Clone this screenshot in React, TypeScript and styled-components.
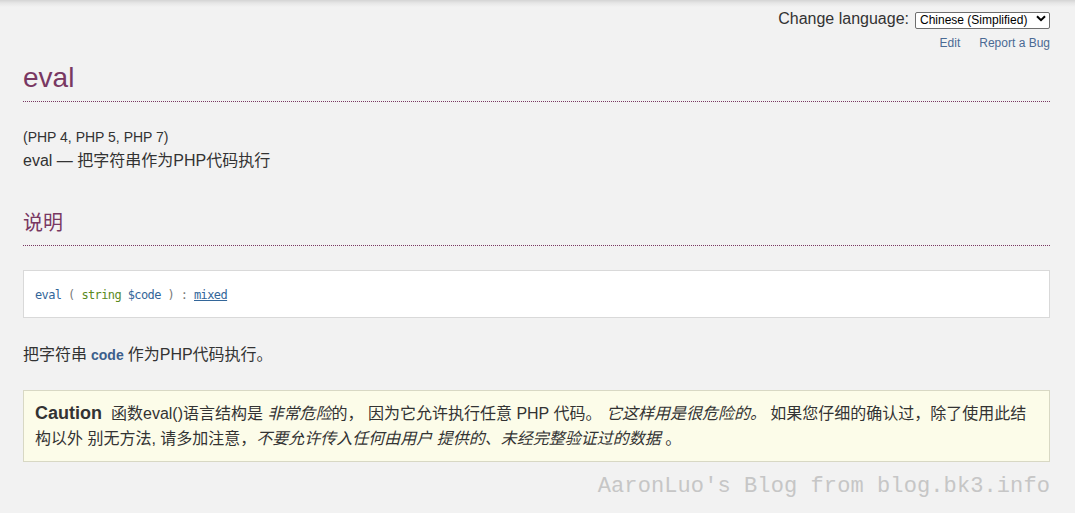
import React from "react";
import styled, { createGlobalStyle } from "styled-components";

const Global = createGlobalStyle`
  html, body { margin: 0; padding: 0; background: #f2f2f2; }
  body {
    font-family: "Liberation Sans", Arial, "Noto Sans CJK SC", sans-serif;
    color: #333;
  }
  * { box-sizing: border-box; }
`;

const Page = styled.div`
  min-height: 513px;
  background: linear-gradient(to bottom, #d4d4d4 0px, #e6e6e6 3px, #f2f2f2 7px, #f2f2f2 100%);
  padding: 0 25px 0 23px;
  font-family: "Liberation Sans", Arial, "Noto Sans CJK SC", sans-serif;
`;

const LangRow = styled.div`
  display: flex;
  justify-content: flex-end;
  align-items: center;
  gap: 6px;
  padding-top: 9px;
  height: 28px;
`;

const LangLabel = styled.label`
  font-size: 16px;
  color: #333;
`;

const SelectWrap = styled.div`
  position: relative;
  width: 135px;
  height: 17px;
`;

const Select = styled.select`
  appearance: none;
  -webkit-appearance: none;
  width: 100%;
  height: 100%;
  border: 1px solid #6e6e6e;
  border-radius: 2px;
  background: #fff;
  font-family: "Liberation Sans", Arial, sans-serif;
  font-size: 12px;
  color: #000;
  padding: 0 0 0 4px;
  line-height: 15px;
`;

const Chevron = styled.svg`
  position: absolute;
  right: 4px;
  top: 5px;
  pointer-events: none;
`;

const EditRow = styled.div`
  display: flex;
  justify-content: flex-end;
  gap: 19px;
  margin-top: 8px;
  height: 16px;
`;

const TopLink = styled.a`
  font-size: 12px;
  color: #4a6a94;
  text-decoration: none;
`;

const Title = styled.h1`
  margin: 9px 0 0;
  font-size: 28px;
  font-weight: normal;
  color: #793862;
  line-height: 34px;
  padding-bottom: 6px;
  border-bottom: 1px dotted #793862;
`;

const Versions = styled.p`
  margin: 27px 0 0;
  font-size: 14px;
  line-height: 17px;
  color: #333;
`;

const Purpose = styled.p`
  margin: 5px 0 0;
  font-size: 16px;
  line-height: 20px;
  color: #333;
  font-family: "Liberation Sans", Arial, "Noto Sans CJK SC", sans-serif;
`;

const SectionTitle = styled.h2`
  margin: 38px 0 0;
  font-size: 20px;
  font-weight: normal;
  color: #793862;
  line-height: 26px;
  padding-bottom: 10px;
  border-bottom: 1px dotted #793862;
  font-family: "Noto Sans CJK SC", sans-serif;
`;

const CodeBox = styled.div`
  margin-top: 24px;
  height: 48px;
  background: #fff;
  border: 1px solid #d9d9d9;
  display: flex;
  align-items: center;
  padding: 2px 11px 0;
  font-family: "DejaVu Sans Mono", "Liberation Mono", monospace;
  font-size: 12px;
  letter-spacing: -0.6px;
  color: #336699;
  white-space: pre;
`;

const Tok = styled.span<{ $kind: "method" | "type" | "param" | "punct" }>`
  color: ${(p) =>
    p.$kind === "type" ? "#5a8a1e" : p.$kind === "punct" ? "#7a7a7a" : "#336699"};
`;

const TypeLink = styled.a`
  color: #336699;
  text-decoration: underline;
`;

const Para = styled.p`
  margin: 27px 0 0;
  font-size: 16px;
  line-height: 20px;
  color: #333;
  font-family: "Liberation Sans", Arial, "Noto Sans CJK SC", sans-serif;
`;

const ParamCode = styled.code`
  font-family: "Liberation Sans", Arial, sans-serif;
  font-weight: bold;
  font-size: 14px;
  color: #3c5f8c;
  margin: 0 4px;
`;

const Caution = styled.div`
  margin-top: 25px;
  background: #fcfce9;
  border: 1px solid #d8d8c4;
  padding: 10px 11px 10px 11px;
  font-size: 16px;
  line-height: 25px;
  color: #333;
  font-family: "Liberation Sans", Arial, "Noto Sans CJK SC", sans-serif;
`;

const CautionLabel = styled.strong`
  font-size: 18px;
  font-weight: bold;
  margin-right: 9px;
`;

const Em = styled.em`
  font-style: italic;
`;

const Watermark = styled.div`
  margin-top: 11px;
  text-align: right;
  font-family: "Liberation Mono", "Courier New", monospace;
  font-size: 22px;
  letter-spacing: 0.1px;
  color: #c6c6c6;
  line-height: 28px;
`;

export default function App() {
  return (
    <>
      <Global />
      <Page>
        <LangRow>
          <LangLabel htmlFor="lang">Change language:</LangLabel>
          <SelectWrap>
            <Select id="lang" defaultValue="zh">
              <option value="zh">Chinese (Simplified)</option>
              <option value="en">English</option>
            </Select>
            <Chevron width="10" height="7" viewBox="0 0 10 7">
              <path d="M1 1.2 L5 5.2 L9 1.2" fill="none" stroke="#000" strokeWidth="2" />
            </Chevron>
          </SelectWrap>
        </LangRow>
        <EditRow>
          <TopLink href="#">Edit</TopLink>
          <TopLink href="#">Report a Bug</TopLink>
        </EditRow>

        <Title>eval</Title>
        <Versions>(PHP 4, PHP 5, PHP 7)</Versions>
        <Purpose>eval — 把字符串作为PHP代码执行</Purpose>

        <SectionTitle>说明</SectionTitle>
        <CodeBox>
          <Tok $kind="method">eval</Tok>
          <Tok $kind="punct"> ( </Tok>
          <Tok $kind="type">string</Tok>
          <Tok $kind="param"> $code</Tok>
          <Tok $kind="punct"> ) : </Tok>
          <TypeLink href="#">mixed</TypeLink>
        </CodeBox>

        <Para>
          把字符串<ParamCode>code</ParamCode>作为PHP代码执行。
        </Para>

        <Caution>
          <CautionLabel>Caution</CautionLabel>
          函数eval()语言结构是 <Em>非常危险</Em>的， 因为它允许执行任意 PHP 代码。 <Em>它这样用是很危险的。</Em> 如果您仔细的确认过，除了使用此结构以外 别无方法, 请多加注意，<Em>不要允许传入任何由用户 提供的、未经完整验证过的数据</Em> 。
        </Caution>

        <Watermark>AaronLuo's Blog from blog.bk3.info</Watermark>
      </Page>
    </>
  );
}
